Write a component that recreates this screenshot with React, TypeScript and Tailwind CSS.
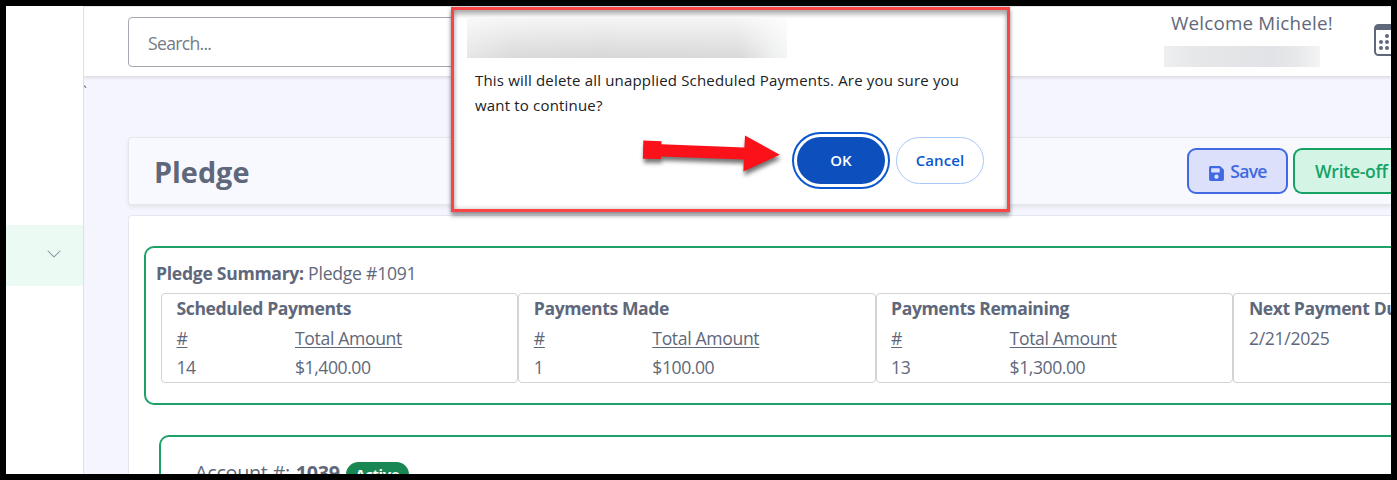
import React from 'react';
import { BsChevronDown } from 'react-icons/bs';
import { FaSave } from 'react-icons/fa';

type StatCardProps = {
    title: string;
    count: string;
    amount: string;
};

const StatCard = ({ title, count, amount }: StatCardProps) => {
    return (
        <div className="w-[357.3px] h-[90px] shrink-0 rounded border border-[#d2d3d5] pl-[14.5px]">
            <h3 className="h-[29px] leading-[29px] font-bold tracking-[-0.42px] whitespace-nowrap">{title}</h3>
            <div className="flex h-[30px] leading-[30px] underline underline-offset-2 tracking-[-0.35px]">
                <div className="w-[118.5px]"><span>#</span></div>
                <span>Total Amount</span>
            </div>
            <div className="flex h-[29px] leading-[29px] tracking-[-0.45px]">
                <div className="w-[118.5px]">{count}</div>
                <div>{amount}</div>
            </div>
        </div>
    );
};

const Arrow = () => (
    <svg className="absolute left-[176px] top-[114px]" width="160" height="60" viewBox="0 0 160 60">
        <path
            d="M13.3 16.5 L31.5 17.3 L31.4 20.3 L114.4 23.5 L115 11.6 L149.8 30.7 L113.4 47.6 L113.8 35.5 L31 32.5 L30.9 35 L12.9 34.8 Z"
            fill="#fb1119"
            className="drop-shadow-[1px_4px_2px_rgba(0,0,0,0.55)]"
        />
    </svg>
);

const ConfirmDialog = () => {
    return (
        <div className="absolute left-[445px] top-px w-[559px] h-[205px] bg-white border-3 border-[#fa4446] shadow-[0_4px_4px_rgba(0,0,0,0.35),0_0_4px_rgba(0,0,0,0.2)]">
            <div className="absolute inset-0 shadow-[inset_0_5px_4px_rgba(0,0,0,0.24),inset_0_0_5px_rgba(0,0,0,0.24)]"></div>
            <div className="relative ml-[13px] mt-2 w-[320px] h-10 bg-[linear-gradient(90deg,#e6e6e6_0%,#dadada_14%,#d7d7d7_40%,#d9d9d9_85%,#f0f1f1_97%,#f5f5f5_100%)]">
                <div className="w-full h-full bg-linear-to-b from-white/75 to-transparent"></div>
            </div>
            <p className="relative ml-[21px] mt-[10px] text-[15px] leading-[25px] tracking-[0.18px] text-[#202124] whitespace-nowrap">
                This will delete all unapplied Scheduled Payments. Are you sure you
                <br />
                want to continue?
            </p>
            <Arrow />
            <div className="relative flex gap-[11px] ml-[343px] mt-[19px] text-[15px] font-semibold">
                <button className="w-[88px] h-[47px] rounded-full bg-[#0d50bd] text-white outline-2 outline-offset-3 outline-[#0b57d0]">OK</button>
                <button className="w-[88px] h-[47px] rounded-full border border-[#a8c7fa] text-[#0b57d0] tracking-[0.1px]">Cancel</button>
            </div>
        </div>
    );
};

const CalendarIcon = () => (
    <svg width="18" height="32" viewBox="0 0 18 32" fill="#5f687b">
        <path d="M18 0H4.5A4.500 4.500 0 0 0 0 4.500V27.500A4.500 4.500 0 0 0 4.500 32H18V30H4.500A2.500 2.500 0 0 1 2 27.500V6H18Z" />
        <circle cx="13" cy="12" r="2" />
        <circle cx="7" cy="18" r="2" />
        <circle cx="13" cy="18" r="2" />
        <circle cx="7" cy="24" r="2" />
        <circle cx="13" cy="24" r="2" />
    </svg>
);

const App = () => {
    return (
        <div className="relative w-[1397px] h-[480px] border-6 border-black bg-black overflow-hidden flex font-['Open_Sans',sans-serif] text-[17.6px] text-[#5f687b]">
            <aside className="w-[78px] shrink-0 bg-white border-r border-[#dfe0e6] pt-[219px]">
                <div className="h-[61px] bg-[#ebfbf4] flex items-center justify-end pr-[21px] pb-1">
                    <BsChevronDown size={16} className="text-[#8390a2]" />
                </div>
            </aside>

            <div className="w-[1307px] h-[468px] overflow-hidden bg-[#f5f5fe]">
                <header className="h-[70px] bg-white border-t border-[#e5e6e9] shadow-[0_1px_4px_rgba(0,0,0,0.16)] flex pl-[44px]">
                    <div className="w-[560px] h-[50px] mt-[10px] rounded border border-[#a5a8b1] px-[19px] leading-[51px] tracking-[-0.7px] text-[#747b84]">Search...</div>
                    <div className="ml-[476px] w-[175px]">
                        <div className="ml-[7px] mt-[3px] leading-[26px] text-[18.8px] tracking-[0.2px] whitespace-nowrap">Welcome Michele!</div>
                        <div className="mt-[10px] w-[156px] h-[21px] bg-[linear-gradient(90deg,#eeeff0,#e6e7e9_20%,#e2e3e6_70%,#e7e8ea_85%,#f4f4f5)]"></div>
                    </div>
                    <div className="ml-[35px] mt-[17px] w-[17px] h-8 overflow-hidden"><CalendarIcon /></div>
                </header>
                <div className="h-[61px] -ml-px pt-[3px] text-[14px] leading-[26px] text-[#4e6080]">`</div>

                <main className="pl-[44px]">
                    <div className="flex items-start h-[68px] rounded-l border border-r-0 border-[#e6e7ee] bg-[#f8f9fe] shadow-[0_2px_4px_rgba(0,0,0,0.08)] pl-[25px] pt-[10px]">
                        <h1 className="w-[1033px] shrink-0 mt-[4px] leading-[40px] text-[28.8px] font-bold">Pledge</h1>
                        <button className="w-[101px] h-[46px] shrink-0 flex items-center justify-center gap-[5px] rounded-[9px] border-2 border-[#4169e1] bg-[#dce0fb] text-[#4169e1] font-semibold tracking-[-0.7px]">
                            <FaSave size={17} className="mt-1" />
                            Save
                        </button>
                        <button className="ml-[5px] w-[98px] h-[46px] shrink-0 pl-5 text-left rounded-l-[9px] border-2 border-r-0 border-[#16a265] bg-[#d4f5e5] text-[#16a265] font-semibold tracking-[-0.3px] whitespace-nowrap">Write-off</button>
                    </div>

                    <div className="mt-[10px] h-[300px] rounded-l border border-r-0 border-[#e6e7ee] bg-white pl-[15px] pt-[30px]">
                        <section className="h-[159px] rounded-l-[10px] border-2 border-r-0 border-[#1ea169] pl-[10px] pt-[11px]">
                            <p className="h-[34px] leading-[29px] tracking-[-0.25px]">
                                <b className="tracking-[-0.3px]">Pledge Summary:</b> Pledge #1091
                            </p>
                            <div className="flex ml-[5px] overflow-hidden">
                                <StatCard title="Scheduled Payments" count="14" amount="$1,400.00" />
                                <StatCard title="Payments Made" count="1" amount="$100.00" />
                                <StatCard title="Payments Remaining" count="13" amount="$1,300.00" />
                                <div className="w-[158px] h-[90px] shrink-0 overflow-hidden rounded-l border border-r-0 border-[#d2d3d5] pl-[15px]">
                                    <h3 className="h-[29px] leading-[29px] font-bold tracking-[-0.42px] whitespace-nowrap">Next Payment Due</h3>
                                    <div className="leading-[30px] tracking-[-0.3px]">2/21/2025</div>
                                </div>
                            </div>
                        </section>

                        <section className="ml-[15px] mt-[30px] h-[100px] rounded-tl-[10px] border-2 border-r-0 border-[#1ea169] pl-[34px] pt-[22px]">
                            <div className="flex items-start text-[19.8px] leading-[27px] tracking-[-0.3px]">
                                <span>Account #:</span>
                                <b className="ml-[6px]">1039</b>
                                <span className="ml-[6px] mt-[3px] w-[63px] h-[25px] rounded-full bg-[#198754] text-white text-center text-[14.8px] leading-[25px] font-bold">Active</span>
                            </div>
                        </section>
                    </div>
                </main>
            </div>

            <ConfirmDialog />
        </div>
    );
};

export default App;
